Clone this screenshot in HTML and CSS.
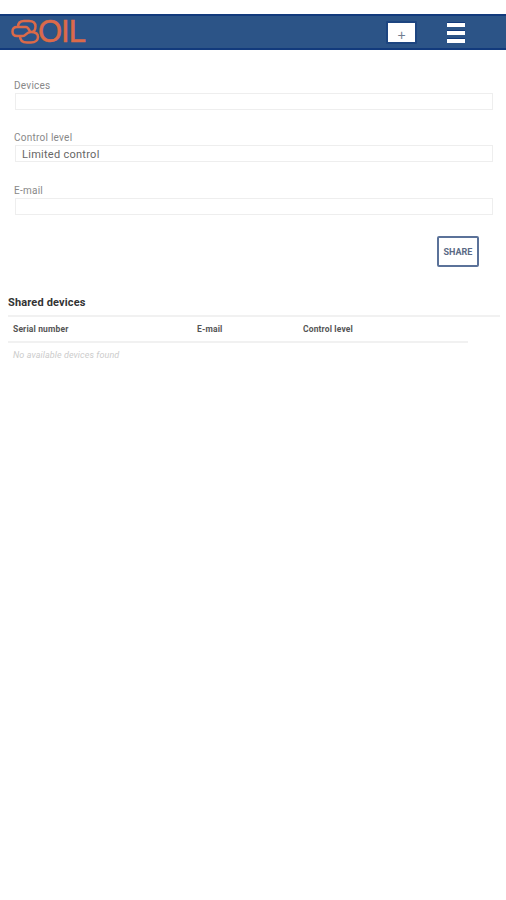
FILE: index.html
```html
<!DOCTYPE html>
<html lang="en">
<head>
    <meta charset="UTF-8">
    <meta name="viewport" content="width=device-width, initial-scale=1.0">
    <title>Share devices</title>
    <link rel="stylesheet" href="styles.css">
</head>
<body>
    <header class="topbar">
        <div class="logo">
            <svg class="logo-mark" width="29" height="26" viewBox="0 0 29 26" fill="none" stroke="#db6a4a" stroke-width="2.5">
                <path d="M7 8 C7 4 9 2 13 2 H18 C22 2 24.5 4 24.5 7.5 C24.5 10.5 23 13 20 13 C24.5 13 27 15 27 18 C27 21 24.5 23.5 20 23.5 H16 C11 23.5 9 21 9 17"/>
                <path d="M20 13 C18 13 18 8 15 8 H6 C3 8 1.5 10 1.5 12.5 C1.5 15 3 17 6 17 H12 C15 17 15 13 20 13"/>
            </svg>
            <span class="logo-text">OIL</span>
        </div>
        <button class="add-btn" type="button">+</button>
        <button class="menu-btn" type="button" aria-label="Menu">
            <span></span><span></span><span></span>
        </button>
    </header>

    <form class="share-form">
        <div class="form-group">
            <label for="devices">Devices</label>
            <input type="text" id="devices" name="devices">
        </div>
        <div class="form-group">
            <label for="level">Control level</label>
            <input type="text" id="level" name="level" value="Limited control">
        </div>
        <div class="form-group">
            <label for="email">E-mail</label>
            <input type="email" id="email" name="email">
        </div>
        <div class="form-actions">
            <button class="share-btn" type="submit">SHARE</button>
        </div>
    </form>

    <section class="shared">
        <h2>Shared devices</h2>
        <div class="table-head">
            <span class="col-serial">Serial number</span>
            <span class="col-email">E-mail</span>
            <span class="col-level">Control level</span>
        </div>
        <p class="empty">No available devices found</p>
    </section>
</body>
</html>
```

FILE: styles.css
```css
* { box-sizing: border-box; }
body { margin: 0; padding-top: 14px; background: #fff; font-family: "Roboto", "Liberation Sans", sans-serif; color: #444; }

.topbar { display: flex; align-items: center; height: 36px; padding-left: 11px; background: #2c5487; border-top: 2px solid #123a7c; border-bottom: 2px solid #123a7c; }
.logo { display: flex; align-items: center; width: 375px; height: 32px; }
.logo-mark { flex: none; }
.logo-text { margin-left: -2px; font-family: "Liberation Sans", sans-serif; font-size: 31px; line-height: 32px; color: #db6a4a; letter-spacing: -1px; -webkit-text-stroke: 0.5px #db6a4a; }
.add-btn { width: 31px; height: 23px; padding: 4px 0 0; background: #fff; border: 2px solid #1d4580; border-radius: 1px; color: #6f7d90; font-size: 14px; line-height: 16px; font-family: "Liberation Sans", sans-serif; }
.menu-btn { display: flex; flex-direction: column; justify-content: space-between; width: 20px; height: 21px; margin-left: 29px; padding: 0 1px; background: none; border: none; }
.menu-btn span { display: block; height: 5px; background: #fff; border-top: 1px solid #123a7c; }

.share-form { padding: 28px 13px 0 15px; }
.form-group { margin-bottom: 20.9px; }
.form-group label { display: block; height: 15px; margin-left: -1px; font-size: 10px; line-height: 15px; letter-spacing: 0.25px; color: #888; }
.form-group input { display: block; width: 100%; height: 16.6px; padding: 1px 7px 0 6px; border: 1px solid #eee; background: #fff; font-family: "Roboto", sans-serif; font-size: 11px; letter-spacing: 0.27px; color: #666; border-radius: 0; outline: none; }
.form-actions { display: flex; justify-content: flex-end; padding: 0.5px 14px 0 0; }
.share-btn { width: 42px; height: 31px; padding: 1px 0 0; background: #fff; border: 2px solid #5b7299; border-radius: 2px; font-family: "Roboto", sans-serif; font-size: 9px; font-weight: 700; color: #5a6a85; }

.shared { padding: 0 6px 0 8px; margin-top: 28px; }
.shared h2 { margin: 0; height: 21px; font-size: 11px; font-weight: 700; line-height: 15px; letter-spacing: 0.15px; color: #333; }
.table-head { position: relative; display: flex; height: 27px; width: 460px; align-items: center; padding: 1px 0 0 5px; font-size: 8.5px; font-weight: 700; letter-spacing: 0.15px; color: #555; border-bottom: 2px solid #f1f1f1; }
.table-head::before { content: ""; position: absolute; top: -1px; left: 0; width: 492px; height: 2px; background: #f1f1f1; }
.col-serial { width: 184px; }
.col-email { width: 106px; }
.empty { margin: 6px 0 0 5px; font-size: 9px; font-style: italic; line-height: 12px; letter-spacing: 0.08px; color: #ccc; }
```
